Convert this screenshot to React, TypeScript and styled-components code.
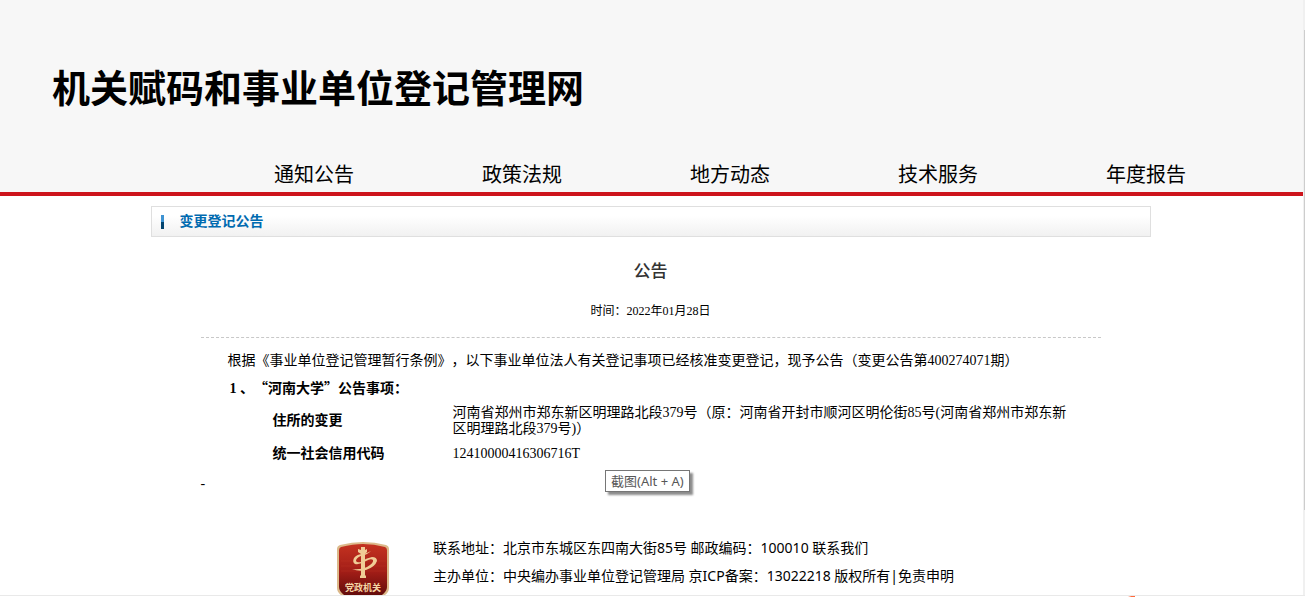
import React from "react";
import styled, { createGlobalStyle } from "styled-components";

const sans = `"Noto Sans", "Noto Sans CJK SC", sans-serif`;
const serif = `"Liberation Serif", "Noto Sans CJK SC", serif`;
const cjk = `"Noto Sans CJK SC", sans-serif`;

const GlobalStyle = createGlobalStyle`
  * { box-sizing: border-box; }
  body { margin: 0; background: #fff; color: #000; font-family: ${serif}; text-spacing-trim: space-all; }
  h1, h2, h3, p { margin: 0; }
`;

const Window = styled.div`
  display: flex;
  border-bottom: 1px solid #e9e9e9;
`;

const Page = styled.div`
  flex: 1;
  min-width: 0;
`;

const ScrollTrack = styled.div`
  width: 2px;
  padding: 30px 0 85px 1px;
  background: #f0f0f0;
  display: flex;
`;

const ScrollThumb = styled.div`
  flex: 1;
  background: #cdcdcd;
`;

const Header = styled.header`
  background: #f7f7f7;
  border-bottom: 4px solid #cd141c;
  padding-top: 58px;
`;

const SiteTitle = styled.h1`
  margin-left: 52px;
  font: bold 38px/56px ${cjk};
`;

const Nav = styled.nav`
  display: flex;
  margin: 42px 53px 0 210px;
`;

const NavLink = styled.a`
  flex: 1;
  color: #000;
  text-align: center;
  text-decoration: none;
  font: 20px/36px ${cjk};
`;

const Content = styled.div`
  padding: 10px 2px 0 0;
`;

const Main = styled.main`
  max-width: 1000px;
  margin: 0 auto;
`;

const SectionBar = styled.div`
  display: flex;
  align-items: center;
  height: 31px;
  padding: 0 9px;
  gap: 16px;
  border: 1px solid #dfdfdf;
  background: linear-gradient(#fff 30%, #f1f1f1);
`;

const Marker = styled.span`
  width: 3px;
  height: 14px;
  background: linear-gradient(#3e93d2 50%, #03456f 50%);
`;

const SectionTitle = styled.h2`
  padding-bottom: 3px;
  color: #006ab0;
  font: bold 14px/20px ${cjk};
`;

const Article = styled.article`
  padding: 0 50px;
`;

const NoticeTitle = styled.h3`
  margin-top: 21px;
  color: #333;
  text-align: center;
  font: 500 17px/24px ${cjk};
`;

const NoticeDate = styled.p`
  padding: 21px 0 18px;
  border-bottom: 1px dashed #c8c8c8;
  text-align: center;
  font-size: 12px;
  line-height: 16px;
`;

const Lead = styled.p`
  margin: 13px 0 0 27px;
  font-size: 14px;
  line-height: 20px;
`;

const Subject = styled.p`
  margin: 6px 0 1px 29px;
  font-size: 14px;
  line-height: 20px;
  font-weight: bold;
`;

const FullWidth = styled.span`
  font-family: ${cjk};
`;

const Changes = styled.table`
  width: 800px;
  margin-left: 72px;
  border-collapse: collapse;
  font-size: 14px;
  line-height: 16px;

  th, td { padding: 5px 0 4px; text-align: left; }
  th { width: 180px; }
`;

const Ending = styled.p`
  padding-top: 10px;
  font-size: 14px;
  line-height: 16px;
`;

const Tooltip = styled.div`
  position: absolute;
  left: 605px;
  top: 470px;
  padding: 0 5px;
  border: 1px solid #767676;
  background: #fff;
  color: #575757;
  box-shadow: 3px 3px 2px rgba(0, 0, 0, 0.45);
  white-space: nowrap;
  font: 13px/20px ${sans};
`;

const Footer = styled.footer`
  display: flex;
  justify-content: center;
  gap: 43px;
  padding: 42px 12px 0 0;
`;

const Emblem = styled.svg`
  display: block;
  margin-top: 7px;
`;

const FooterText = styled.address`
  white-space: nowrap;
  font: normal 14px/28px ${sans};
`;

const FooterLink = styled.a`
  color: inherit;
  text-decoration: none;
`;

const CornerMark = styled.div`
  width: 7px;
  height: 1px;
  margin-left: 1128px;
  background: linear-gradient(90deg, #fff, #ff6a3c 50%);
`;

const Badge = () => (
  <Emblem width="53" height="54" viewBox="0 0 53 54" role="img" aria-label="党政机关">
    <defs>
      <linearGradient id="shield" x1="0" y1="0" x2="0" y2="1">
        <stop offset="0" stopColor="#c43220" />
        <stop offset="0.55" stopColor="#a11d17" />
        <stop offset="1" stopColor="#640c0b" />
      </linearGradient>
    </defs>
    <path d="M0 8Q0 5 3 4Q15 1 26 1Q38 1 49 4Q52 5 52 8V47Q52 51 48 54V56H4V54Q0 51 0 47Z" fill="#dcb98a" />
    <path d="M2 9Q2 7 4 6Q16 3 26 3Q37 3 48 6Q50 7 50 9V46Q50 50 45 54H7Q2 50 2 46Z" fill="url(#shield)" />
    <path d="M4 20H49M4 25H49M4 30H49" stroke="#d34b35" strokeWidth="0.5" opacity="0.4" />
    <path d="M21 8l3 1V6h4v3l2-1v3l-2 2v21l1 1v2h-6v-2l1-1V13l-3-2Z" fill="#f0cc96" />
    <path d="M34 10Q30 14 24 15Q19 17 19 20Q20 22 24 21Q29 17 35 16Q40 16 40 20Q38 26 29 29Q22 31 15 28Q24 29 30 26Q37 22 36 19Q34 17 29 20Q23 24 18 23Q15 21 17 17Q20 13 26 13Q31 12 34 10Z" fill="#f0cc96" />
    <text x="26" y="50" textAnchor="middle" fill="#f5d5a5" fontFamily="Noto Sans CJK SC, sans-serif" fontSize="9" fontWeight="bold">党政机关</text>
  </Emblem>
);

const sections = ["通知公告", "政策法规", "地方动态", "技术服务", "年度报告"];

export default function App() {
  return (
    <>
      <GlobalStyle />
      <Window lang="zh-CN">
        <Page>
          <Header>
            <SiteTitle>机关赋码和事业单位登记管理网</SiteTitle>
            <Nav>
              {sections.map((name) => (
                <NavLink href="#" key={name}>{name}</NavLink>
              ))}
            </Nav>
          </Header>
          <Content>
            <Main>
              <SectionBar>
                <Marker />
                <SectionTitle>变更登记公告</SectionTitle>
              </SectionBar>
              <Article>
                <NoticeTitle>公告</NoticeTitle>
                <NoticeDate>时间：2022年01月28日</NoticeDate>
                <Lead>根据《事业单位登记管理暂行条例》，以下事业单位法人有关登记事项已经核准变更登记，现予公告（变更公告第400274071期）</Lead>
                <Subject>1 <FullWidth>、“河南大学”公告事项：</FullWidth></Subject>
                <Changes>
                  <tbody>
                    <tr>
                      <th scope="row">住所的变更</th>
                      <td>河南省郑州市郑东新区明理路北段379号（原：河南省开封市顺河区明伦街85号(河南省郑州市郑东新区明理路北段379号)）</td>
                    </tr>
                    <tr>
                      <th scope="row">统一社会信用代码</th>
                      <td>12410000416306716T</td>
                    </tr>
                  </tbody>
                </Changes>
                <Ending>-</Ending>
              </Article>
            </Main>
          </Content>
          <Footer>
            <Badge />
            <FooterText>
              联系地址：北京市东城区东四南大街85号 邮政编码：100010 <FooterLink href="#">联系我们</FooterLink>
              <br />
              主办单位：中央编办事业单位登记管理局 京ICP备案：13022218 版权所有|<FooterLink href="#">免责申明</FooterLink>
            </FooterText>
          </Footer>
        </Page>
        <ScrollTrack>
          <ScrollThumb />
        </ScrollTrack>
      </Window>
      <CornerMark />
      <Tooltip role="tooltip">截图(Alt + A)</Tooltip>
    </>
  );
}
